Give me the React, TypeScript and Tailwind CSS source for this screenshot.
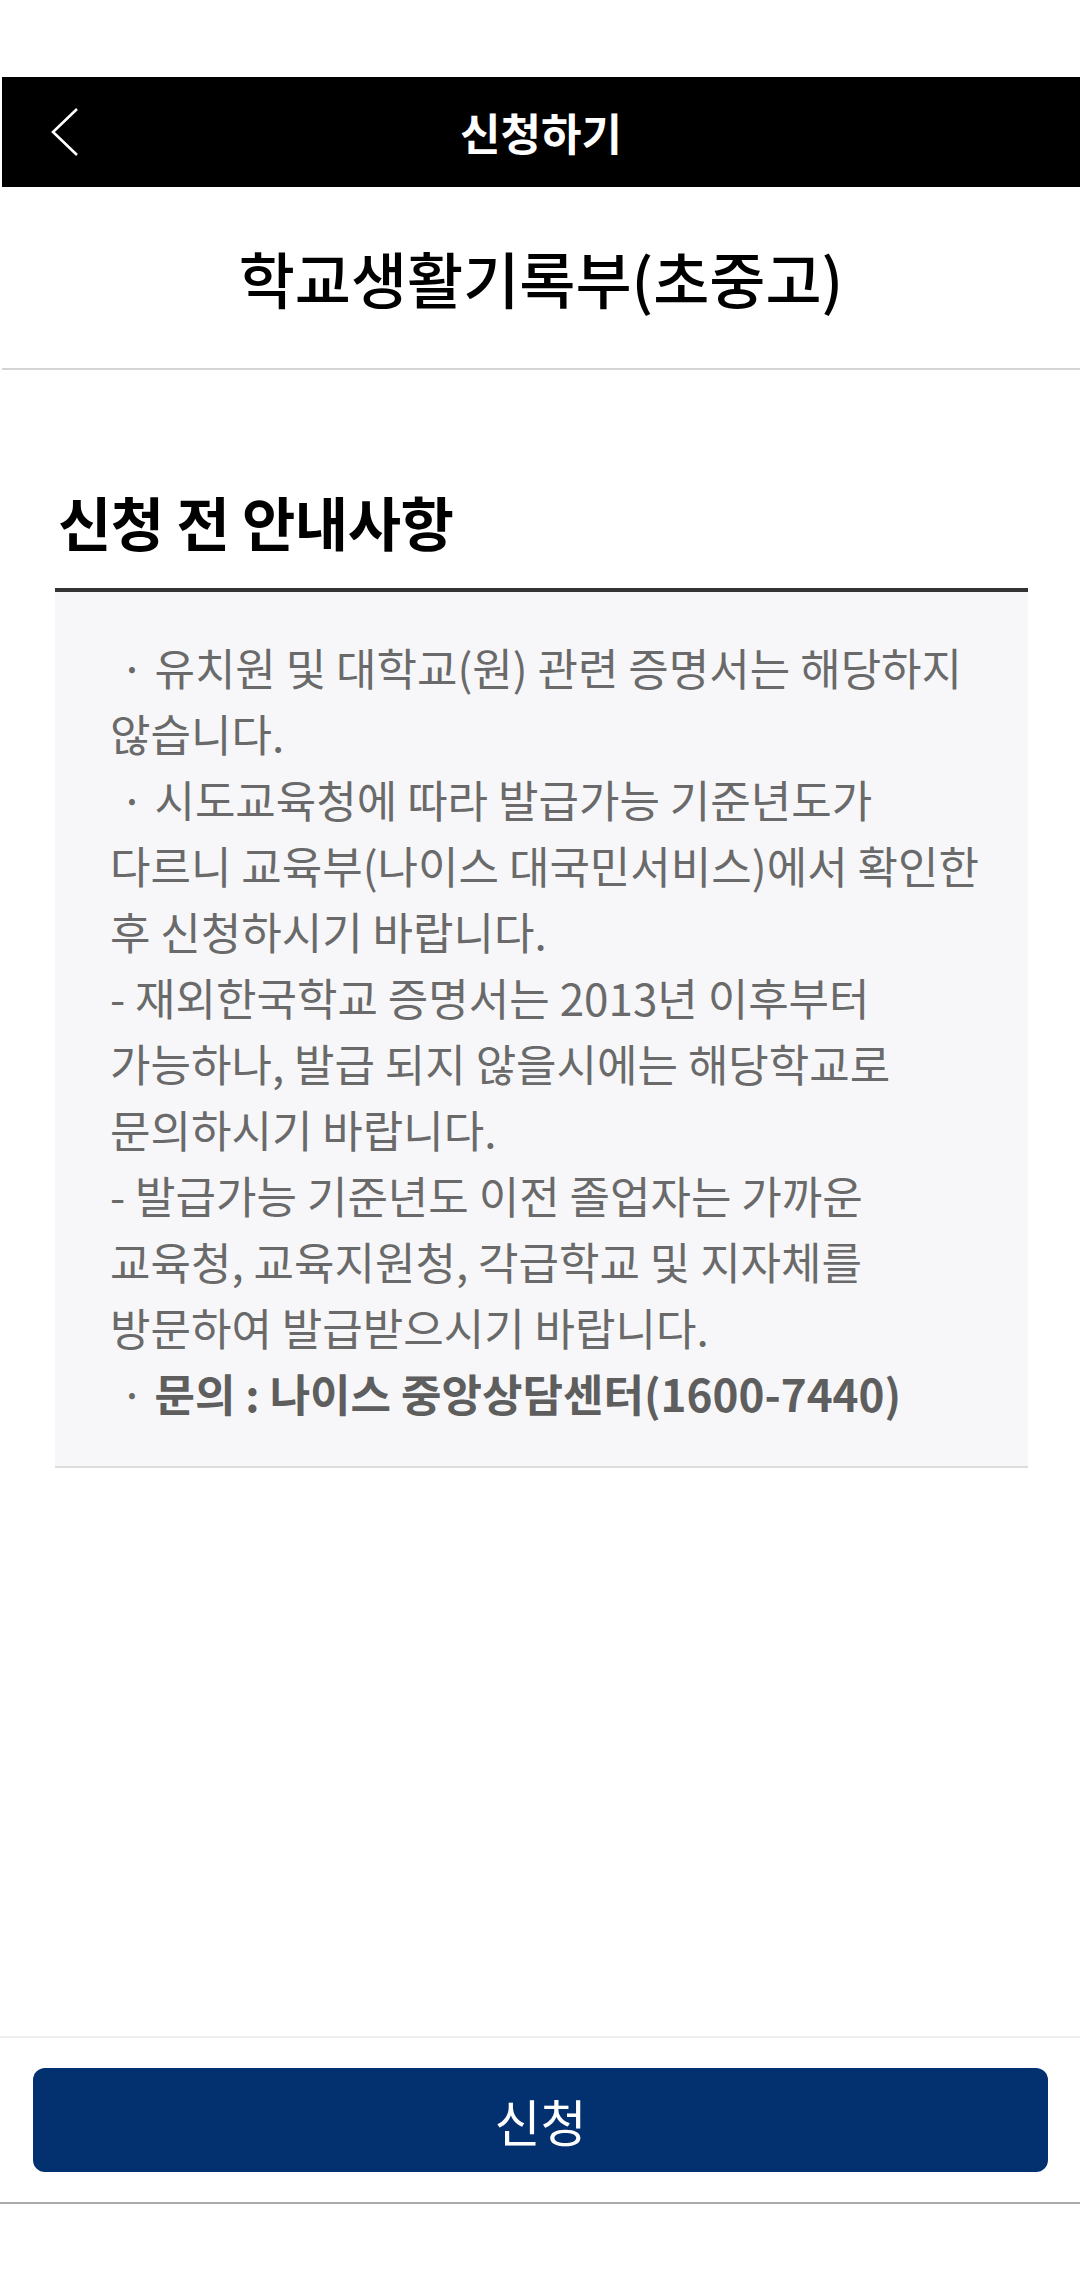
import React from "react";

const FONT = { fontFamily: '"Noto Sans CJK KR", "Noto Sans", sans-serif' };

const lines: { text: string; bullet?: boolean; bold?: boolean }[] = [
  { text: "유치원 및 대학교(원) 관련 증명서는 해당하지", bullet: true },
  { text: "않습니다." },
  { text: "시도교육청에 따라 발급가능 기준년도가", bullet: true },
  { text: "다르니 교육부(나이스 대국민서비스)에서 확인한" },
  { text: "후 신청하시기 바랍니다." },
  { text: "- 재외한국학교 증명서는 2013년 이후부터" },
  { text: "가능하나, 발급 되지 않을시에는 해당학교로" },
  { text: "문의하시기 바랍니다." },
  { text: "- 발급가능 기준년도 이전 졸업자는 가까운" },
  { text: "교육청, 교육지원청, 각급학교 및 지자체를" },
  { text: "방문하여 발급받으시기 바랍니다." },
  { text: "문의 : 나이스 중앙상담센터(1600-7440)", bullet: true, bold: true },
];

const App: React.FC = () => {
  return (
    <div className="w-[1080px] min-h-[2280px] bg-white flex flex-col" style={FONT}>
      {/* status bar space */}
      <div className="h-[77px]" />

      {/* header */}
      <div className="ml-[2px] h-[110px] bg-black grid grid-cols-[1fr_auto_1fr] items-center">
        <div className="pl-[48px] flex items-center">
          <svg width="30" height="50" viewBox="0 0 30 50" fill="none">
            <polyline points="27,2 3,25 27,48" stroke="#ffffff" strokeWidth="2.6" strokeLinejoin="miter" />
          </svg>
        </div>
        <div className="text-white text-[44px] font-bold leading-none">신청하기</div>
        <div />
      </div>

      {/* document title */}
      <div className="ml-[2px] h-[183px] flex items-center justify-center border-b-2 border-[#d4d4d4]">
        <h1 className="text-[61px] font-medium text-black leading-none">
          학교생활기록부(초중고)
        </h1>
      </div>

      {/* notice section */}
      <div className="pl-[55px] pr-[52px] pt-[116px]">
        <h2 className="text-[58px] font-bold text-black leading-[70px] tracking-[-0.5px] pl-[3px]">
          신청 전 안내사항
        </h2>
        <div className="mt-[32px] h-[4px] bg-[#333333]" />
        <div className="bg-[#f7f7f9] pl-[55px] pr-[10px] pt-[42px] pb-[40px] border-b-2 border-[#dddddd]">
          {lines.map((l, i) => (
            <div
              key={i}
              className="whitespace-pre text-[44px] leading-[66px] text-[#6a6a6a]"
            >
              {l.bullet ? " · " : ""}
              {l.bold ? <span className="font-bold text-[#5e5e5e]">{l.text}</span> : l.text}
            </div>
          ))}
        </div>
      </div>

      <div className="flex-1" />

      {/* footer */}
      <div className="border-t-2 border-[#eeeeee] pt-[30px] pb-[30px] pl-[33px] pr-[32px] border-b-2 border-b-[#aaaaaa]">
        <button className="w-full h-[104px] rounded-[12px] bg-[#03316f] text-white text-[50px] font-normal flex items-center justify-center">
          신청
        </button>
      </div>
      <div className="h-[76px]" />
    </div>
  );
};

export default App;
